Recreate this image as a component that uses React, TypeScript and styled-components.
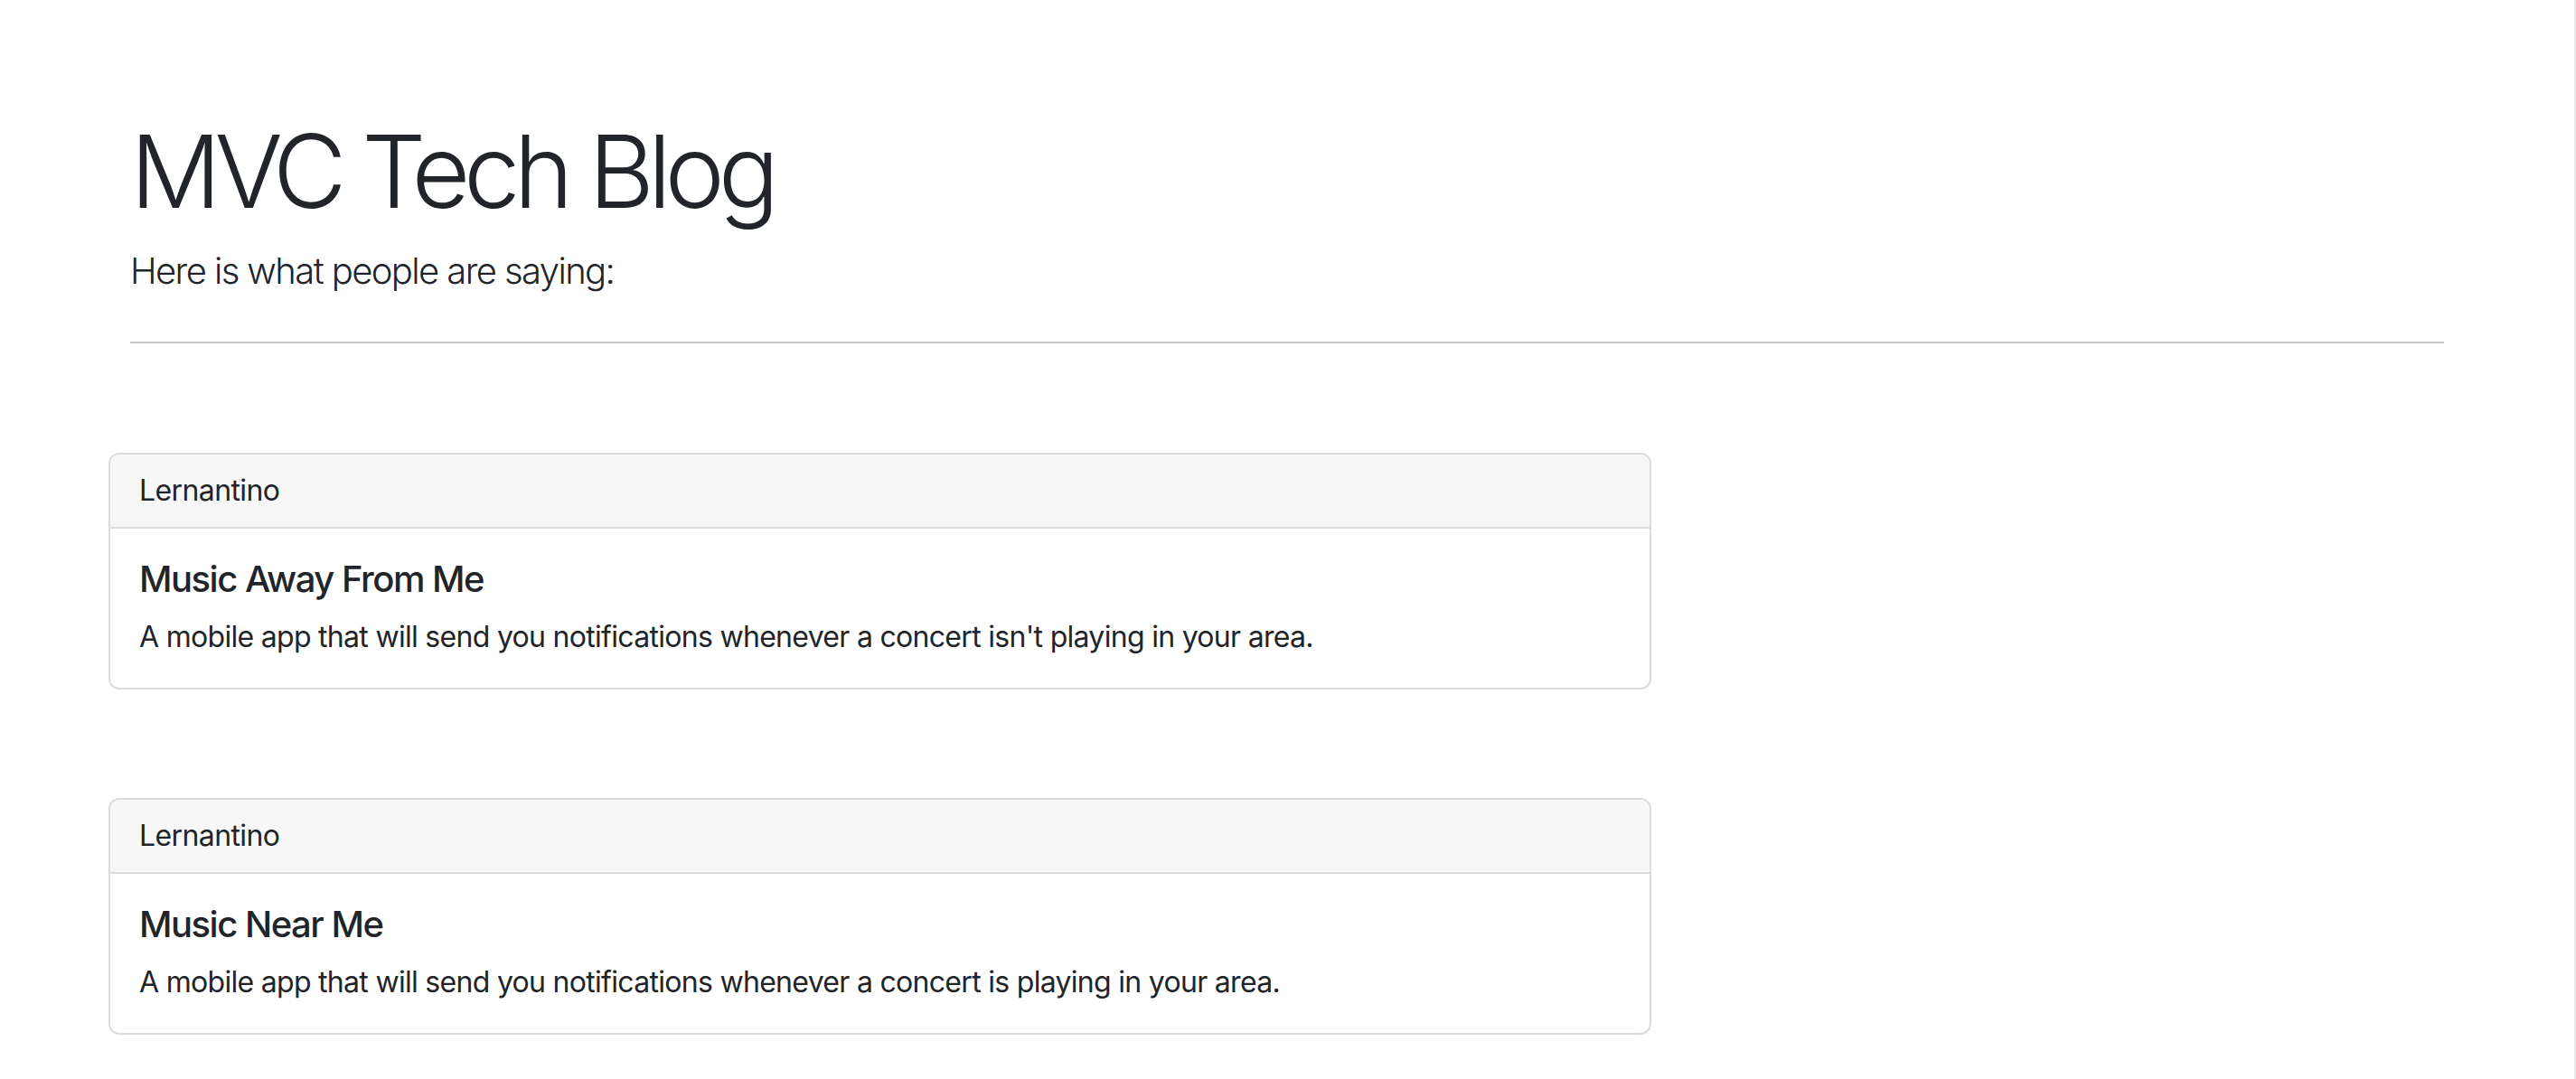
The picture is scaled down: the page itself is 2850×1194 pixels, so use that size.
import React from "react";
import styled, { createGlobalStyle } from "styled-components";

const GlobalStyle = createGlobalStyle`
  html {
    min-height: 100%;
    box-shadow: inset -2px 0 0 #e8e8e8;
  }
  body {
    margin: 0;
    background: #ffffff;
    color: #212529;
    font-family: Inter, "Noto Sans", "Liberation Sans", sans-serif;
    font-size: 32px;
    line-height: 1.5;
  }
`;

const Page = styled.div`
  display: flex;
  flex-direction: column;
  padding-bottom: 64px;
`;

const Hero = styled.header`
  display: flex;
  flex-direction: column;
  padding: 122px 146px 0 144px;
`;

const Title = styled.h1`
  margin: 0;
  font-size: 112px;
  font-weight: 300;
  line-height: 1.2;
  letter-spacing: -7.3px;
`;

const Lead = styled.p`
  margin: 14px 0 0;
  font-size: 40px;
  font-weight: 300;
  line-height: 1.5;
  letter-spacing: -1.6px;
`;

const Rule = styled.hr`
  width: 100%;
  margin: 48px 0 0;
  border: 0;
  border-top: 2px solid #c8c9ca;
`;

const PostList = styled.main`
  display: flex;
  flex-direction: column;
  gap: 120px;
  width: 1707px;
  margin: 121px 0 0 120px;
`;

const Card = styled.article`
  display: flex;
  flex-direction: column;
  border: 2px solid #dadbdc;
  border-radius: 12px;
  overflow: hidden;
  background: #fff;
`;

const CardHeader = styled.div`
  padding: 16px 32px;
  background: #f7f7f7;
  border-bottom: 2px solid #dadbdc;
  font-size: 32px;
  line-height: 48px;
  letter-spacing: -0.6px;
`;

const CardBody = styled.div`
  display: flex;
  flex-direction: column;
  padding: 32px 32px 32px;
`;

const CardTitle = styled.h5`
  margin: 0 0 16px;
  font-size: 40px;
  font-weight: 500;
  line-height: 1.2;
  letter-spacing: -1.5px;
`;

const CardText = styled.p`
  margin: 0;
  font-size: 32px;
  line-height: 48px;
  letter-spacing: -0.7px;
`;

const posts = [
  {
    author: "Lernantino",
    title: "Music Away From Me",
    text: "A mobile app that will send you notifications whenever a concert isn't playing in your area.",
  },
  {
    author: "Lernantino",
    title: "Music Near Me",
    text: "A mobile app that will send you notifications whenever a concert is playing in your area.",
  },
];

export default function App() {
  return (
    <>
      <GlobalStyle />
      <Page>
        <Hero>
          <Title>MVC Tech Blog</Title>
          <Lead>Here is what people are saying:</Lead>
          <Rule />
        </Hero>
        <PostList>
          {posts.map((p, i) => (
            <Card key={i}>
              <CardHeader>{p.author}</CardHeader>
              <CardBody>
                <CardTitle>{p.title}</CardTitle>
                <CardText>{p.text}</CardText>
              </CardBody>
            </Card>
          ))}
        </PostList>
      </Page>
    </>
  );
}
